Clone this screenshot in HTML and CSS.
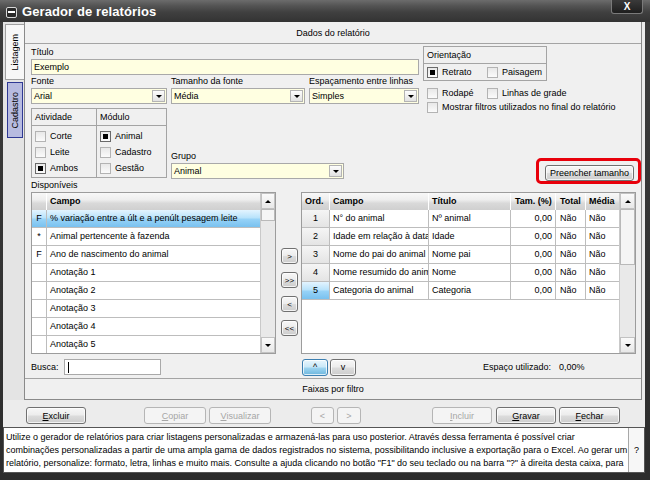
FILE: index.html
```html
<!DOCTYPE html>
<html lang="pt">
<head>
<meta charset="utf-8">
<title>Gerador de relatórios</title>
<link rel="stylesheet" href="styles.css">
</head>
<body>
<div class="window">
  <div class="titlebar">
    <span class="sysicon"><span class="sysbar"></span></span>
    <span class="wtitle">Gerador de relatórios</span>
    <span class="closebtn">X</span>
  </div>
  <div class="frame">
    <div class="client">
      <div class="upper">
        <div class="tabstrip">
          <div class="vtab vtab-list"><span>Listagem</span></div>
          <div class="vtab vtab-cad"><span>Cadastro</span></div>
        </div>
        <div class="panel">
          <div class="panel-head">Dados do relatório</div>
          <div class="panel-body">
            <div class="top">
              <div class="top-left">
                <div class="lbl lbl-tall">Título</div>
                <div class="input yellow w-full">Exemplo</div>
                <div class="selrow">
                  <div class="field w-fonte">
                    <div class="lbl">Fonte</div>
                    <div class="select">Arial<span class="dd"></span></div>
                  </div>
                  <div class="field w-tam">
                    <div class="lbl">Tamanho da fonte</div>
                    <div class="select">Média<span class="dd"></span></div>
                  </div>
                  <div class="field w-esp">
                    <div class="lbl">Espaçamento entre linhas</div>
                    <div class="select">Simples<span class="dd"></span></div>
                  </div>
                </div>
                <div class="lowrow">
                  <div class="filterbox">
                    <div class="fcol fcol-a">
                      <div class="fhead">Atividade</div>
                      <div class="fitems">
                        <div class="chk"><span class="box"></span>Corte</div>
                        <div class="chk"><span class="box"></span>Leite</div>
                        <div class="chk"><span class="box on"></span>Ambos</div>
                      </div>
                    </div>
                    <div class="fcol fcol-m">
                      <div class="fhead">Módulo</div>
                      <div class="fitems">
                        <div class="chk"><span class="box on"></span>Animal</div>
                        <div class="chk"><span class="box"></span>Cadastro</div>
                        <div class="chk"><span class="box"></span>Gestão</div>
                      </div>
                    </div>
                  </div>
                  <div class="field w-grupo">
                    <div class="lbl lbl-tall">Grupo</div>
                    <div class="select">Animal<span class="dd"></span></div>
                  </div>
                </div>
              </div>
              <div class="top-right">
                <div class="orient">
                  <div class="fhead">Orientação</div>
                  <div class="orow">
                    <div class="chk w60"><span class="box on"></span>Retrato</div>
                    <div class="chk"><span class="box"></span>Paisagem</div>
                  </div>
                </div>
                <div class="opts">
                  <div class="orow2">
                    <div class="chk w60"><span class="box"></span>Rodapé</div>
                    <div class="chk"><span class="box"></span>Linhas de grade</div>
                  </div>
                  <div class="orow2">
                    <div class="chk"><span class="box"></span>Mostrar filtros utilizados no final do relatório</div>
                  </div>
                </div>
                <div class="ring"><div class="btn btn-fill">Preencher tamanho</div></div>
              </div>
            </div>
            <div class="lbl lbl-disp">Disponíveis</div>
            <div class="lists">
              <div class="grid grid-left">
                <div class="gtable">
                  <div class="grow ghead"><div class="gc c-mk"></div><div class="gc c-campo">Campo</div></div>
                  <div class="grow sel"><div class="gc c-mk">F</div><div class="gc c-campo">% variação entre a últ e a penúlt pesagem leite</div></div>
                  <div class="grow"><div class="gc c-mk">*</div><div class="gc c-campo">Animal pertencente à fazenda</div></div>
                  <div class="grow"><div class="gc c-mk">F</div><div class="gc c-campo">Ano de nascimento do animal</div></div>
                  <div class="grow"><div class="gc c-mk"></div><div class="gc c-campo">Anotação 1</div></div>
                  <div class="grow"><div class="gc c-mk"></div><div class="gc c-campo">Anotação 2</div></div>
                  <div class="grow"><div class="gc c-mk"></div><div class="gc c-campo">Anotação 3</div></div>
                  <div class="grow"><div class="gc c-mk"></div><div class="gc c-campo">Anotação 4</div></div>
                  <div class="grow"><div class="gc c-mk"></div><div class="gc c-campo">Anotação 5</div></div>
                </div>
                <div class="vscroll">
                  <div class="sb-btn"><span class="tri-up"></span></div>
                  <div class="sb-thumb thumb-s"></div>
                  <div class="sb-track"></div>
                  <div class="sb-btn"><span class="tri-down"></span></div>
                </div>
              </div>
              <div class="movers">
                <div class="btn mbtn">&gt;</div>
                <div class="btn mbtn">&gt;&gt;</div>
                <div class="btn mbtn">&lt;</div>
                <div class="btn mbtn">&lt;&lt;</div>
              </div>
              <div class="grid grid-right">
                <div class="gtable">
                  <div class="grow ghead">
                    <div class="gc c-ord">Ord.</div><div class="gc c-rc">Campo</div><div class="gc c-tit">Título</div><div class="gc c-tam">Tam. (%)</div><div class="gc c-tot">Total</div><div class="gc c-med">Média</div>
                  </div>
                  <div class="grow"><div class="gc c-ord">1</div><div class="gc c-rc">N° do animal</div><div class="gc c-tit">Nº animal</div><div class="gc c-tam">0,00</div><div class="gc c-tot">Não</div><div class="gc c-med">Não</div></div>
                  <div class="grow"><div class="gc c-ord">2</div><div class="gc c-rc">Idade em relação à data</div><div class="gc c-tit">Idade</div><div class="gc c-tam">0,00</div><div class="gc c-tot">Não</div><div class="gc c-med">Não</div></div>
                  <div class="grow"><div class="gc c-ord">3</div><div class="gc c-rc">Nome do pai do animal</div><div class="gc c-tit">Nome pai</div><div class="gc c-tam">0,00</div><div class="gc c-tot">Não</div><div class="gc c-med">Não</div></div>
                  <div class="grow"><div class="gc c-ord">4</div><div class="gc c-rc">Nome resumido do animal</div><div class="gc c-tit">Nome</div><div class="gc c-tam">0,00</div><div class="gc c-tot">Não</div><div class="gc c-med">Não</div></div>
                  <div class="grow"><div class="gc c-ord ord-sel">5</div><div class="gc c-rc">Categoria do animal</div><div class="gc c-tit">Categoria</div><div class="gc c-tam">0,00</div><div class="gc c-tot">Não</div><div class="gc c-med">Não</div></div>
                </div>
                <div class="vscroll vscroll-r">
                  <div class="sb-btn"><span class="tri-up"></span></div>
                  <div class="sb-thumb thumb-l"></div>
                  <div class="sb-track"></div>
                  <div class="sb-btn"><span class="tri-down"></span></div>
                </div>
              </div>
            </div>
            <div class="busca">
              <span class="busca-lbl">Busca:</span>
              <span class="input busca-in"><span class="caret"></span></span>
              <span class="btn btn-up">^</span>
              <span class="btn btn-down">v</span>
              <span class="esp-lbl">Espaço utilizado:</span>
              <span class="esp-val">0,00%</span>
            </div>
          </div>
          <div class="faixas">Faixas por filtro</div>
        </div>
      </div>
      <div class="actions">
        <div class="btn b-excluir"><u>E</u>xcluir</div>
        <div class="btn dis b-copiar"><u>C</u>opiar</div>
        <div class="btn dis b-visual"><u>V</u>isualizar</div>
        <div class="btn dis b-prev">&lt;</div>
        <div class="btn dis b-next">&gt;</div>
        <div class="btn dis b-incluir"><u>I</u>ncluir</div>
        <div class="btn b-gravar"><u>G</u>ravar</div>
        <div class="btn b-fechar"><u>F</u>echar</div>
      </div>
      <div class="help">
        <div class="help-text">Utilize o gerador de relatórios para criar listagens personalizadas e armazená-las para uso posterior. Através dessa ferramenta é possível criar<br>combinações personalizadas a partir de uma ampla gama de dados registrados no sistema, possibilitando inclusive a exportação para o Excel. Ao gerar um<br>relatório, personalize: formato, letra, linhas e muito mais. Consulte a ajuda clicando no botão "F1" do seu teclado ou na barra "?" à direita desta caixa, para</div>
        <div class="help-q">?</div>
      </div>
    </div>
  </div>
</div>
</body>
</html>
```

FILE: styles.css
```css
* { box-sizing: border-box; }
html, body { margin: 0; padding: 0; }
body {
  width: 650px; height: 480px; overflow: hidden;
  font-family: "Liberation Sans", Arial, sans-serif;
  font-size: 9px; color: #000; background: #333;
}
.window { width: 650px; height: 480px; display: flex; flex-direction: column; background: #363636; }

/* title bar */
.titlebar {
  height: 22px; flex: none; display: flex; align-items: center;
  background: linear-gradient(#6c6c6c 0%, #555 25%, #404040 55%, #333 100%);
  padding-left: 6px; position: relative;
}
.sysicon {
  width: 11px; height: 11px; border: 1px solid #d8d8d8; border-radius: 2px;
  background: #2a2a2a; display: flex; align-items: center; justify-content: center; margin-top: 2px;
}
.sysbar { width: 7px; height: 2px; background: #fff; }
.wtitle { color: #fff; font-size: 13px; font-weight: bold; margin-left: 5px; letter-spacing: 0.1px; }
.closebtn {
  position: absolute; left: 611px; top: 0; width: 32px; height: 14px;
  background: linear-gradient(#3a3a3a, #1e1e1e); border: 1px solid #7a7a7a; border-top: none;
  border-radius: 0 0 3px 3px; color: #fff; font-weight: bold; font-size: 10px;
  display: flex; align-items: center; justify-content: center;
}

.frame { flex: 1; padding: 0 5px 7px 3px; background: linear-gradient(#3c3c3c, #2c2c2c); }
.client { height: 451px; background: #ececec; display: flex; flex-direction: column; }

.upper { height: 378px; display: flex; padding-right: 3px; flex: none; }
.tabstrip { width: 21px; background: #e4e4e4; display: flex; flex-direction: column; flex: none; }
.vtab { display: flex; align-items: center; justify-content: center; }
.vtab span { writing-mode: vertical-rl; transform: rotate(180deg); font-size: 9px; }
.vtab-list { margin: 2px 0 0 2px; width: 19px; height: 56px; background: #f7f7f7; border: 1px solid #a0a0a0; border-right: none; }
.vtab-cad { margin: 2px 0 0 4px; width: 16px; height: 56px; background: #b7bbe0; border: 1px solid #2e3894; }

.panel {
  width: 618px; flex: none; background: #f0f0f0;
  border: 1px solid #8a8a8a; border-top: none;
  display: flex; flex-direction: column;
}
.panel-head {
  height: 22px; border-bottom: 1px solid #a4a4a4; text-align: center; line-height: 22px;
  background: #f0f0f0;
}
.panel-body { height: 334px; padding: 1px 0 0 6px; display: flex; flex-direction: column; }

.lbl { height: 13px; line-height: 13px; white-space: nowrap; }
.lbl-tall { height: 14px; line-height: 14px; }
.input {
  height: 16px; border: 1px solid #a9a9a9; line-height: 14px; padding-left: 2px;
  background: #fff; white-space: nowrap;
}
.yellow { background: #ffffe1; }
.w-full { width: 388px; }

.top { height: 139px; display: flex; flex: none; }
.top-left { width: 388px; display: flex; flex-direction: column; }
.selrow { display: flex; gap: 4px; }
.field { display: flex; flex-direction: column; }
.w-fonte { width: 136px; }
.w-tam { width: 134px; }
.w-esp { width: 110px; }
.select {
  height: 16px; border: 1px solid #a9a9a9; background: #ffffe1;
  display: flex; align-items: center; padding-left: 2px; white-space: nowrap;
}
.dd {
  margin-left: auto; margin-right: 1px; width: 13px; height: 12px;
  border: 1px solid #b4b4b4; background: linear-gradient(#fdfdfd, #e2e2e2);
  display: flex; align-items: center; justify-content: center;
}
.dd::after, .tri-down {
  content: ""; width: 0; height: 0;
  border-left: 3px solid transparent; border-right: 3px solid transparent; border-top: 3px solid #000;
}
.tri-up {
  width: 0; height: 0;
  border-left: 3px solid transparent; border-right: 3px solid transparent; border-bottom: 3px solid #000;
}

.lowrow { display: flex; margin-top: 4px; }
.filterbox { width: 136px; height: 70px; border: 1px solid #a4a4a4; display: flex; background: #f0f0f0; }
.fcol { display: flex; flex-direction: column; }
.fcol-a { width: 65px; border-right: 1px solid #a4a4a4; }
.fcol-m { flex: 1; }
.fhead { height: 17px; border-bottom: 1px solid #a4a4a4; line-height: 16px; padding-left: 3px; }
.fitems { padding-top: 2px; }
.fcol-a .fitems { padding-left: 3px; }
.fcol-m .fitems { padding-left: 3px; }
.chk { height: 16px; display: flex; align-items: center; white-space: nowrap; }
.box {
  width: 11px; height: 11px; flex: none; margin-right: 4px;
  border: 1px solid #b3b3b3; background: linear-gradient(#e8e8e8, #fbfbfb);
  display: flex; align-items: center; justify-content: center;
}
.box.on { border-color: #6a6a6a; }
.box.on::after { content: ""; width: 5px; height: 5px; background: #000; }
.w-grupo { margin-left: 4px; padding-top: 41px; width: 177px; }
.w-grupo .select { width: 173px; }

.top-right { margin-left: 4px; width: 218px; display: flex; flex-direction: column; }
.orient { margin-top: 1px; width: 124px; height: 35px; border: 1px solid #a4a4a4; }
.orow { height: 16px; display: flex; padding-left: 3px; }
.w60 { width: 60px; }
.opts { margin-top: 5px; padding-left: 4px; }
.orow2 { height: 14px; display: flex; align-items: center; }
.orow2 .chk { height: 14px; }

.ring {
  margin-top: auto; align-self: flex-end; width: 105px; height: 26px;
  border: 3px solid #e8000b; border-radius: 5px; padding: 4px 4px 0 6px;
}
.btn {
  height: 17px; border: 1px solid #707070; border-radius: 3px;
  background: linear-gradient(#f7f7f7 0%, #ececec 48%, #dcdcdc 52%, #cdcdcd 100%);
  box-shadow: inset 0 0 0 1px rgba(255,255,255,0.75);
  display: flex; align-items: center; justify-content: center; white-space: nowrap; flex: none;
}
.btn.dis { border-color: #b5b5b5; background: #f4f4f4; color: #a6a6a6; box-shadow: none; }
.btn-fill { width: 89px; height: 16px; }

.lbl-disp { margin-top: -5px; }

.lists { display: flex; height: 162px; flex: none; }
.grid { border: 1px solid #9c9c9c; background: #fff; display: flex; overflow: hidden; }
.grid-left { width: 245px; }
.grid-right { width: 335px; }
.gtable { flex: 1; overflow: hidden; }
.grow { display: flex; height: 18px; border-bottom: 1px solid #bdbdbd; }
.gc {
  height: 17px; line-height: 17px; white-space: nowrap; overflow: hidden;
  border-right: 1px solid #bdbdbd; padding-left: 3px; flex: none;
}
.ghead { height: 17px; border-bottom: none; }
.ghead .gc {
  height: 17px; line-height: 17px; font-weight: bold; border-right: 1px solid #fff;
  background: linear-gradient(#f8f8f8 0%, #eeeeee 40%, #d9d9d9 60%, #cfcfcf 100%);
}
.sel { background: linear-gradient(#e3f4ff 0%, #b9e3fb 45%, #96d2f7 55%, #79c1ef 100%); }
.c-mk { width: 15px; padding-left: 0; text-align: center; }
.c-campo { flex: 1; border-right: none; }
.ghead .c-campo { border-right: none; }

.c-ord { width: 28px; padding-left: 0; text-align: center; background: linear-gradient(#f5f5f5, #e4e4e4); }
.ghead .c-ord { text-align: left; padding-left: 3px; }
.ord-sel { background: linear-gradient(#e3f4ff 0%, #b9e3fb 45%, #96d2f7 55%, #79c1ef 100%); }
.c-rc { width: 99px; }
.c-tit { width: 82px; }
.c-tam { width: 45px; text-align: right; padding-right: 3px; padding-left: 0; }
.ghead .c-tam { text-align: left; padding-left: 4px; padding-right: 0; }
.c-tot { width: 30px; padding-left: 4px; }
.c-med { width: 33px; border-right: none; padding-left: 3px; }
.ghead .c-med { border-right: none; }

.vscroll { width: 15px; flex: none; display: flex; flex-direction: column; background: #e9e9e9; border-left: 1px solid #c9c9c9; }
.vscroll-r { width: 16px; }
.sb-btn {
  height: 16px; flex: none; border: 1px solid #c2c2c2; background: linear-gradient(#fafafa, #e8e8e8);
  display: flex; align-items: center; justify-content: center;
}
.sb-thumb { flex: none; border: 1px solid #b9b9b9; background: #f5f5f5; }
.thumb-s { height: 12px; }
.thumb-l { height: 56px; }
.sb-track { flex: 1; }

.movers { width: 25px; flex: none; display: flex; flex-direction: column; gap: 8px; padding: 56px 0 0 5px; }
.mbtn { width: 17px; height: 16px; font-size: 8px; }

.busca { display: flex; align-items: center; height: 18px; margin-top: 4px; flex: none; }
.busca-lbl { width: 33px; }
.busca-in { width: 97px; height: 16px; display: flex; align-items: center; padding-left: 3px; }
.caret { width: 1px; height: 11px; background: #000; }
.btn-up {
  margin-left: 141px; width: 26px;
  border-color: #3c7fb1;
  background: linear-gradient(#e8f6fd 0%, #c9e8f8 48%, #9fd5f1 52%, #6cb6dd 100%);
}
.btn-down { margin-left: 2px; width: 26px; }
.esp-lbl { margin-left: 127px; width: 76px; }

.faixas { height: 21px; border-top: 1px solid #a4a4a4; text-align: center; line-height: 20px; }

.actions { height: 27px; flex: none; display: flex; padding: 7px 0 0 23px; }
.actions u { text-decoration: underline; }
.b-excluir { width: 60px; }
.b-copiar { width: 62px; margin-left: 58px; }
.b-visual { width: 62px; margin-left: 3px; }
.b-prev { width: 23px; margin-left: 40px; }
.b-next { width: 24px; margin-left: 3px; }
.b-incluir { width: 60px; margin-left: 71px; }
.b-gravar { width: 60px; margin-left: 4px; }
.b-fechar { width: 61px; margin-left: 3px; }

.help { height: 46px; flex: none; display: flex; background: #fff; border: 1px solid #555; }
.help-text { flex: 1; padding: 3px 2px; line-height: 13px; white-space: nowrap; overflow: hidden; }
.help-q { width: 16px; border-left: 1px solid #a8a8a8; background: #f7f7f7; display: flex; align-items: center; justify-content: center; }
```
